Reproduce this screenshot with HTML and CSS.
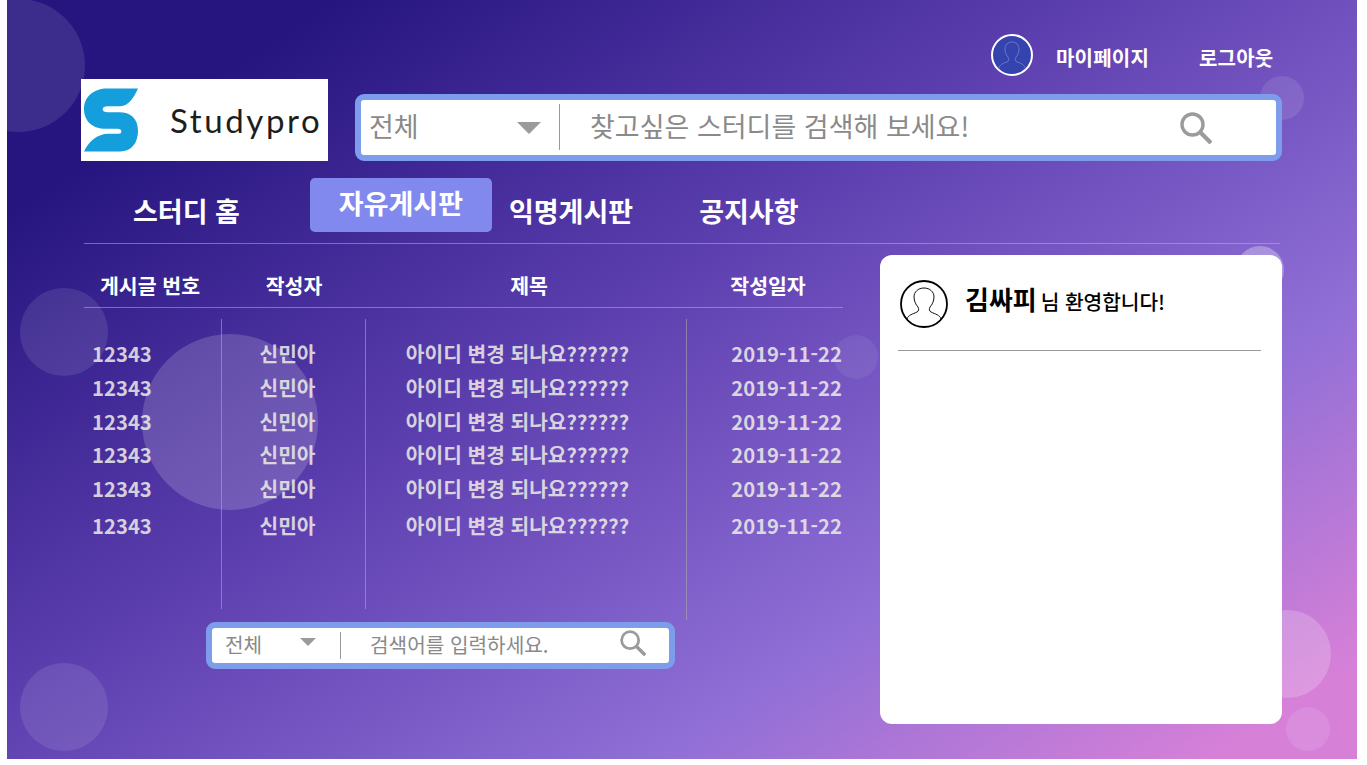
FILE: index.html
```html
<!DOCTYPE html>
<html lang="ko">
<head>
<meta charset="utf-8">
<title>Studypro 자유게시판</title>
<link rel="stylesheet" href="styles.css">
</head>
<body>
<div class="stage">
  <span class="dot dot-a"></span><span class="dot dot-b"></span><span class="dot dot-c"></span>
  <span class="dot dot-d"></span><span class="dot dot-e"></span><span class="dot dot-f"></span>
  <span class="dot dot-g"></span><span class="dot dot-h"></span><span class="dot dot-i"></span>

  <div class="userbar">
    <svg class="top-avatar" viewBox="0 0 42 42">
      <circle cx="21" cy="21" r="20" fill="#3443ad" stroke="#fff" stroke-width="2"/>
      <path d="M8 34c1-4 5-5 8-6 2-1 2-3 1-5-2-2-3-5-3-8 0-4 3-7 7-7s7 3 7 7c0 3-1 6-3 8-1 2-1 4 1 5 3 1 7 2 8 6" fill="none" stroke="#6a78c8" stroke-width="1"/>
    </svg>
    <a class="user-link mypage">마이페이지</a>
    <a class="user-link">로그아웃</a>
  </div>

  <header class="brandrow">
    <div class="logo">
      <svg class="logo-mark" viewBox="0 0 56 64">
        <path d="M55 0H24C10 0 0 8 0 21c0 12 9 20 22 20h12c3 0 4 1 4 3s-2 2-4 2H25C13 46 5 54 0 64h37c11 0 18-8 18-21S47 24 36 24H24c-3 0-5-1-5-3s2-3 5-3h13C45 18 51 9 55 0Z" fill="#149fdc"/>
      </svg>
      <span class="logo-text">Studypro</span>
    </div>
    <div class="search search-lg">
      <span class="search-scope">전체</span>
      <span class="caret"></span>
      <span class="search-sep"></span>
      <span class="search-hint">찾고싶은 스터디를 검색해 보세요!</span>
      <svg class="search-icon" viewBox="0 0 32 32">
        <circle cx="12.5" cy="12.5" r="10.5" fill="none" stroke="#9b9b9b" stroke-width="3.4"/>
        <path d="M20 20l11 11" stroke="#9b9b9b" stroke-width="4.2"/>
      </svg>
    </div>
  </header>

  <nav class="tabs">
    <a class="tab tab-home">스터디 홈</a>
    <a class="tab tab-active">자유게시판</a>
    <a class="tab tab-anon">익명게시판</a>
    <a class="tab tab-notice">공지사항</a>
  </nav>

  <main class="content">
    <section class="board">
      <div class="board-head">
        <span class="h-no">게시글 번호</span>
        <span class="h-author">작성자</span>
        <span class="h-title">제목</span>
        <span class="h-date">작성일자</span>
      </div>
      <div class="board-cols">
        <div class="col col-no">
          <div class="cell">12343</div><div class="cell">12343</div><div class="cell">12343</div>
          <div class="cell">12343</div><div class="cell">12343</div><div class="cell cell-last">12343</div>
        </div>
        <div class="col col-author">
          <div class="cell">신민아</div><div class="cell">신민아</div><div class="cell">신민아</div>
          <div class="cell">신민아</div><div class="cell">신민아</div><div class="cell cell-last">신민아</div>
        </div>
        <div class="col col-title">
          <div class="cell">아이디 변경 되나요??????</div><div class="cell">아이디 변경 되나요??????</div><div class="cell">아이디 변경 되나요??????</div>
          <div class="cell">아이디 변경 되나요??????</div><div class="cell">아이디 변경 되나요??????</div><div class="cell cell-last">아이디 변경 되나요??????</div>
        </div>
        <div class="col col-date">
          <div class="cell">2019-11-22</div><div class="cell">2019-11-22</div><div class="cell">2019-11-22</div>
          <div class="cell">2019-11-22</div><div class="cell">2019-11-22</div><div class="cell cell-last">2019-11-22</div>
        </div>
      </div>
      <div class="search search-sm">
        <span class="search-scope">전체</span>
        <span class="caret"></span>
        <span class="search-sep"></span>
        <span class="search-hint">검색어를 입력하세요.</span>
        <svg class="search-icon" viewBox="0 0 32 32">
          <circle cx="12.5" cy="12.5" r="10.5" fill="none" stroke="#9b9b9b" stroke-width="3.4"/>
          <path d="M20 20l11 11" stroke="#9b9b9b" stroke-width="4.2"/>
        </svg>
      </div>
    </section>

    <aside class="card">
      <div class="welcome">
        <svg class="card-avatar" viewBox="0 0 48 48">
          <circle cx="24" cy="24" r="23" fill="#fff" stroke="#000" stroke-width="1.8"/>
          <path d="M7 39c1-4 6-5 10-7 2-1 2-3 1-5-2-2-4-6-4-10 0-5 4-9 10-9s10 4 10 9c0 4-2 8-4 10-1 2-1 4 1 5 4 2 9 3 10 7" fill="none" stroke="#111" stroke-width="1"/>
        </svg>
        <strong class="welcome-name">김싸피</strong>
        <span class="welcome-text">님 환영합니다!</span>
      </div>
    </aside>
  </main>
</div>
</body>
</html>
```
FILE: styles.css
```css
* { box-sizing: border-box; }
html, body { margin: 0; background: #fff; }
body { font-family: "Noto Sans CJK KR", "Noto Sans", sans-serif; }

.stage {
  position: relative;
  width: 1350px;
  height: 759px;
  margin-left: 7px;
  padding-top: 34px;
  overflow: hidden;
  background: linear-gradient(147deg, #26157f 13%, #5e40b0 44%, #906fd6 72%, #d680d8 94%);
}

.dot { position: absolute; border-radius: 50%; background: rgba(255,255,255,.1); }
.dot-a { left: -55px; top: -1px; width: 133px; height: 133px; }
.dot-b { left: 1253px; top: 76px; width: 44px; height: 44px; }
.dot-c { left: 1229px; top: 246px; width: 48px; height: 48px; background: rgba(255,255,255,.3); }
.dot-d { left: 13px; top: 288px; width: 88px; height: 88px; }
.dot-e { left: 135px; top: 334px; width: 176px; height: 176px; background: rgba(255,255,255,.17); }
.dot-f { left: 827px; top: 335px; width: 44px; height: 44px; background: rgba(255,255,255,.07); }
.dot-g { left: 13px; top: 663px; width: 88px; height: 88px; }
.dot-h { left: 1236px; top: 610px; width: 88px; height: 88px; background: rgba(255,255,255,.2); }
.dot-i { left: 1279px; top: 707px; width: 44px; height: 44px; }

.userbar {
  position: relative;
  display: flex;
  align-items: center;
  height: 42px;
  padding-left: 984px;
}
.top-avatar { width: 42px; height: 42px; display: block; }
.user-link { color: #fff; font-size: 20px; font-weight: 700; line-height: 42px; margin-top: 6px; white-space: nowrap; letter-spacing: .2px; }
.mypage { margin-left: 23px; margin-right: 50px; }

.brandrow {
  position: relative;
  display: flex;
  align-items: flex-end;
  height: 82px;
  margin-top: 3px;
  padding-left: 74px;
}
.logo {
  display: flex;
  align-items: center;
  width: 247px;
  height: 82px;
  background: #fff;
  flex: none;
}
.logo-mark { width: 55px; height: 64px; margin-left: 3px; flex: none; }
.logo-text {
  margin-left: 31px;
  font-family: "Lato", sans-serif;
  font-size: 33px;
  line-height: 1;
  letter-spacing: 2.6px;
  color: #1d1d1d;
}

.search {
  display: flex;
  align-items: center;
  background: #fff;
  border: 6px solid #7d9ce9;
  border-radius: 9px;
  color: #8a8a8a;
  flex: none;
}
.search-scope, .search-hint { white-space: nowrap; line-height: 1.2; }
.caret { width: 0; height: 0; flex: none; border-style: solid; border-color: #9b9b9b transparent transparent; }
.search-sep { flex: none; width: 1px; background: #999; }
.search-icon { display: block; flex: none; }

.search-lg { width: 927px; height: 67px; margin-left: 27px; font-size: 27px; }
.search-lg .search-scope { margin-left: 8px; margin-bottom: 2px; width: 148px; }
.search-lg .caret { border-width: 12px 12px 0; }
.search-lg .search-sep { height: 46px; margin-left: 18px; margin-bottom: 1px; }
.search-lg .search-hint { margin-left: 30px; margin-bottom: 2px; width: 590px; }
.search-lg .search-icon { width: 32px; height: 32px; }

.tabs {
  position: relative;
  display: flex;
  height: 66px;
  margin: 17px 77px 0 77px;
  border-bottom: 1px solid rgba(190,190,190,.5);
  color: #fff;
  font-size: 27px;
  font-weight: 700;
}
.tab { display: block; white-space: nowrap; line-height: 40px; padding-top: 13px; }
.tab-home { margin-left: 49px; }
.tab-active {
  width: 182px;
  height: 54px;
  margin-left: 70px;
  padding-top: 5px;
  text-align: center;
  background: #8289ee;
  border-radius: 5px;
}
.tab-anon { margin-left: 17px; }
.tab-notice { margin-left: 66px; }

.content {
  position: relative;
  display: flex;
  margin: 11px 0 0 77px;
}
.board { width: 759px; flex: none; }
.board-head {
  display: grid;
  grid-template-columns: 132px 156px 314px 164px;
  height: 53px;
  border-bottom: 1px solid rgba(190,190,190,.5);
  color: #fff;
  font-size: 20.5px;
  font-weight: 700;
  line-height: 28px;
  padding-top: 16px;
  text-align: center;
  white-space: nowrap;
}

.board-cols {
  display: grid;
  grid-template-columns: 137px 144px 321px 157px;
  height: 290px;
  margin-top: 11px;
  color: rgba(238,238,230,.85);
  font-size: 20.3px;
  font-weight: 700;
}
.col { height: 290px; padding-top: 18.2px; }
.col + .col { border-left: 1px solid rgba(170,170,165,.6); }
.cell { height: 33.7px; line-height: 33.7px; white-space: nowrap; }
.cell-last { margin-top: 3.3px; }
.col-no { padding-left: 8px; }
.col-author { text-align: center; padding-right: 12px; }
.col-title { text-align: center; padding-right: 17px; }
.col-date { height: 301px; text-align: right; padding-right: 1px; }

.search-sm { width: 469px; height: 47px; margin: 13px 0 0 122px; font-size: 20.2px; }
.search-sm .search-scope { margin-left: 13px; width: 75px; }
.search-sm .caret { border-width: 8px 8px 0; margin-top: -8px; }
.search-sm .search-sep { height: 27px; margin-left: 24px; }
.search-sm .search-hint { margin-left: 29px; width: 250px; }
.search-sm .search-icon { width: 26px; height: 26px; margin-bottom: 6px; }

.card {
  width: 402px;
  height: 469px;
  margin-left: 37px;
  flex: none;
  background: #fff;
  border-radius: 12px;
  padding: 25px 21px 0 18px;
}
.welcome {
  display: flex;
  align-items: center;
  height: 71px;
  padding-bottom: 23px;
  border-bottom: 1px solid #999;
  color: #000;
}
.card-avatar { width: 48px; height: 48px; margin-left: 2px; flex: none; display: block; }
.welcome-name { margin-left: 17px; margin-bottom: 10px; font-size: 26px; font-weight: 700; line-height: 36px; }
.welcome-text { margin-left: 4px; margin-bottom: 5px; font-size: 20.3px; font-weight: 500; line-height: 36px; letter-spacing: -.05px; }
```
